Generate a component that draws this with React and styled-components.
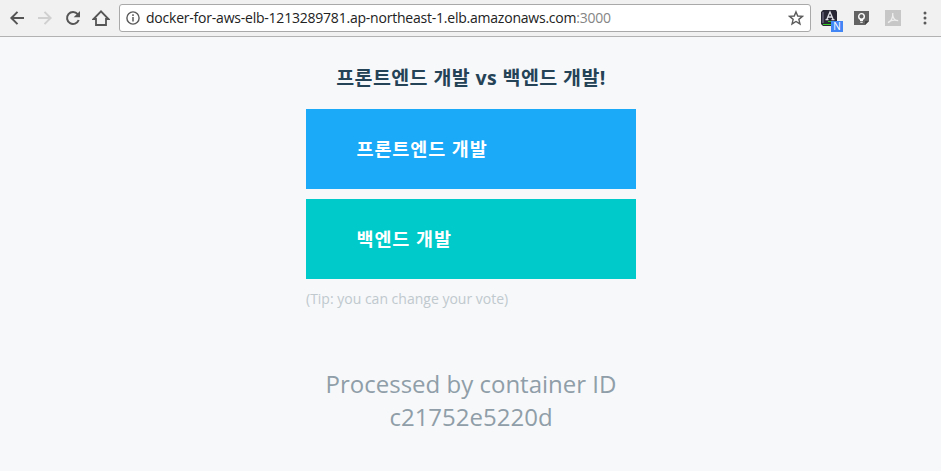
import React from 'react';
import styled, { createGlobalStyle } from 'styled-components';

const GlobalStyle = createGlobalStyle`
  * { box-sizing: border-box; }
  html, body { margin: 0; background: #f7f8fa; }
  body { font-family: "Open Sans", "Noto Sans CJK KR", sans-serif; }
`;

const Page = styled.div`
  display: flex;
  flex-direction: column;
  height: 471px;
  overflow: hidden;
  background: #f7f8fa;
`;

const Toolbar = styled.header`
  display: flex;
  align-items: center;
  height: 37px;
  flex: none;
  padding: 0 2px 0 3px;
  background: #f1f1f1;
  border-bottom: 1px solid #b2b2b2;
`;

const ToolButton = styled.button`
  display: flex;
  align-items: center;
  justify-content: center;
  width: 28px;
  height: 28px;
  padding: 0;
  border: 0;
  background: none;
  color: ${({ $muted }) => ($muted ? '#d0d0d0' : '#555')};
`;

const AddressBar = styled.div`
  display: flex;
  align-items: center;
  width: 692px;
  height: 28px;
  margin-left: 4px;
  padding: 0 6px;
  background: #fff;
  border: 1px solid #a9a9a9;
  border-radius: 3px;
  color: #5a5a5a;
`;

const Url = styled.span`
  flex: 1;
  margin-left: 6px;
  font: 14px/20px "Open Sans", sans-serif;
  letter-spacing: -0.22px;
  white-space: nowrap;
  color: #222;
`;

const Port = styled.span`
  color: #858585;
`;

const Extensions = styled.div`
  display: flex;
  align-items: center;
  flex: 1;
  height: 28px;
  padding-left: 10px;
`;

const ExtensionIcon = styled.div`
  position: relative;
  display: flex;
  flex: none;
  width: 16px;
  height: 16px;
  margin-right: ${({ $gap }) => $gap}px;
`;

const Badge = styled.span`
  position: absolute;
  left: 10px;
  top: 11px;
  width: 12px;
  height: 11px;
  background: #4285f4;
  color: #fff;
  font: 10px/11px "Open Sans", sans-serif;
  text-align: center;
`;

const Poll = styled.main`
  display: flex;
  flex-direction: column;
  width: 330px;
  margin: 0 0 0 306px;
  padding-top: 26px;
`;

const Title = styled.h3`
  margin: 0 0 16px;
  font-size: 19.5px;
  line-height: 30px;
  font-weight: 700;
  letter-spacing: 0.4px;
  text-align: center;
  white-space: nowrap;
  color: #254356;
`;

const Choice = styled.button`
  height: 80px;
  margin: 0 0 10px;
  padding: 0 0 2px 50.5px;
  border: 0;
  background: ${({ $color }) => $color};
  color: #fff;
  font: 700 18.5px/27px "Open Sans", "Noto Sans CJK KR", sans-serif;
  letter-spacing: 0.9px;
  text-align: left;
`;

const Tip = styled.div`
  font-size: 14px;
  line-height: 20px;
  color: #c0c9ce;
`;

const Host = styled.div`
  margin-top: 58px;
  font-size: 24px;
  line-height: 33px;
  text-align: center;
  color: #8f9ea8;
`;

const Back = () => (
  <svg width="16" height="16" viewBox="0 0 16 16" fill="none" stroke="currentColor" strokeWidth="2">
    <path d="M15 8H2.8M8.5 1.9L2.4 8l6.1 6.1" />
  </svg>
);

const Forward = () => (
  <svg width="16" height="16" viewBox="0 0 16 16" fill="none" stroke="currentColor" strokeWidth="2">
    <path d="M1 8h12.2M7.5 1.9L13.6 8l-6.1 6.1" />
  </svg>
);

const Reload = () => (
  <svg width="16" height="16" viewBox="0 0 16 16" fill="none">
    <path d="M12.7 4.2A6 6 0 1 0 13.7 10" stroke="currentColor" strokeWidth="2" />
    <path d="M15 1v6.3H8.7z" fill="currentColor" />
  </svg>
);

const Home = () => (
  <svg width="18" height="18" viewBox="0 0 18 18" fill="none" stroke="currentColor" strokeWidth="1.8">
    <path d="M1.6 10L9 2.4l7.4 7.6H14v6H4v-6z" />
  </svg>
);

const Info = () => (
  <svg width="14" height="14" viewBox="0 0 14 14" fill="none" stroke="currentColor">
    <circle cx="7" cy="7" r="6.1" strokeWidth="1.4" />
    <path d="M7 6v4.5M7 3.3v1.6" strokeWidth="1.5" />
  </svg>
);

const Star = () => (
  <svg width="16" height="16" viewBox="0 0 16 16" fill="none" stroke="currentColor" strokeWidth="1.4">
    <path d="M8 1.9l1.75 4.1 4.65.35-3.55 3 1.12 4.55L8 11.45 4.03 13.9l1.12-4.55-3.55-3L6.25 6z" />
  </svg>
);

const Dictionary = () => (
  <svg width="16" height="16" viewBox="0 0 16 16" fill="none">
    <path d="M2 0h13l1 2v14H2L0 14V2z" fill="#292735" />
    <path d="M1 2h2v11H1z" fill="#555365" />
    <path d="M6 9L9 2l3 7M7 7h4M4.5 9.6h3M10.5 9.6h3" stroke="#dddde4" strokeWidth="1.3" />
    <path d="M2 14.5h9M7 11.5h3" stroke="#35cf28" strokeWidth="1" />
  </svg>
);

const Keep = () => (
  <svg width="16" height="16" viewBox="0 0 16 16" fill="none">
    <path d="M1 1h15v10l-4 4H1z" fill="#636363" />
    <path d="M16 11h-4v4z" fill="#424242" />
    <circle cx="8.5" cy="6.4" r="2.8" stroke="#fff" strokeWidth="1.4" />
    <path d="M7 9h3v2H7zM7.3 11.7h2.4v1H7.3z" fill="#fff" />
  </svg>
);

const Pdf = () => (
  <svg width="16" height="16" viewBox="0 0 16 16" fill="none">
    <path d="M0 0h16v16H0z" fill="#c7c7c7" />
    <path d="M3 12.8c3.7-2 5-5.8 4.8-9.8M7.7 5c.5 3.8 2.5 5.5 5.5 5.7M3.5 11.8c2.5-1.5 5.7-2 9.3-1.2" stroke="#eee" strokeWidth="1.3" />
  </svg>
);

const More = () => (
  <svg width="4" height="14" viewBox="0 0 4 14" fill="#5a5a5a">
    <circle cx="2" cy="2" r="1.5" />
    <circle cx="2" cy="7" r="1.5" />
    <circle cx="2" cy="12" r="1.5" />
  </svg>
);

export default function App() {
  return (
    <>
      <GlobalStyle />
      <Page>
        <Toolbar>
          <ToolButton aria-label="Back"><Back /></ToolButton>
          <ToolButton aria-label="Forward" $muted><Forward /></ToolButton>
          <ToolButton aria-label="Reload"><Reload /></ToolButton>
          <ToolButton aria-label="Home"><Home /></ToolButton>
          <AddressBar>
            <Info />
            <Url>docker-for-aws-elb-1213289781.ap-northeast-1.elb.amazonaws.com<Port>:3000</Port></Url>
            <Star />
          </AddressBar>
          <Extensions>
            <ExtensionIcon $gap={16}><Dictionary /><Badge>N</Badge></ExtensionIcon>
            <ExtensionIcon $gap={16}><Keep /></ExtensionIcon>
            <ExtensionIcon $gap={22}><Pdf /></ExtensionIcon>
            <More />
          </Extensions>
        </Toolbar>
        <Poll>
          <Title>프론트엔드 개발 vs 백엔드 개발!</Title>
          <Choice $color="#1aaaf8">프론트엔드 개발</Choice>
          <Choice $color="#00cbca">백엔드 개발</Choice>
          <Tip>(Tip: you can change your vote)</Tip>
          <Host>Processed by container ID c21752e5220d</Host>
        </Poll>
      </Page>
    </>
  );
}
